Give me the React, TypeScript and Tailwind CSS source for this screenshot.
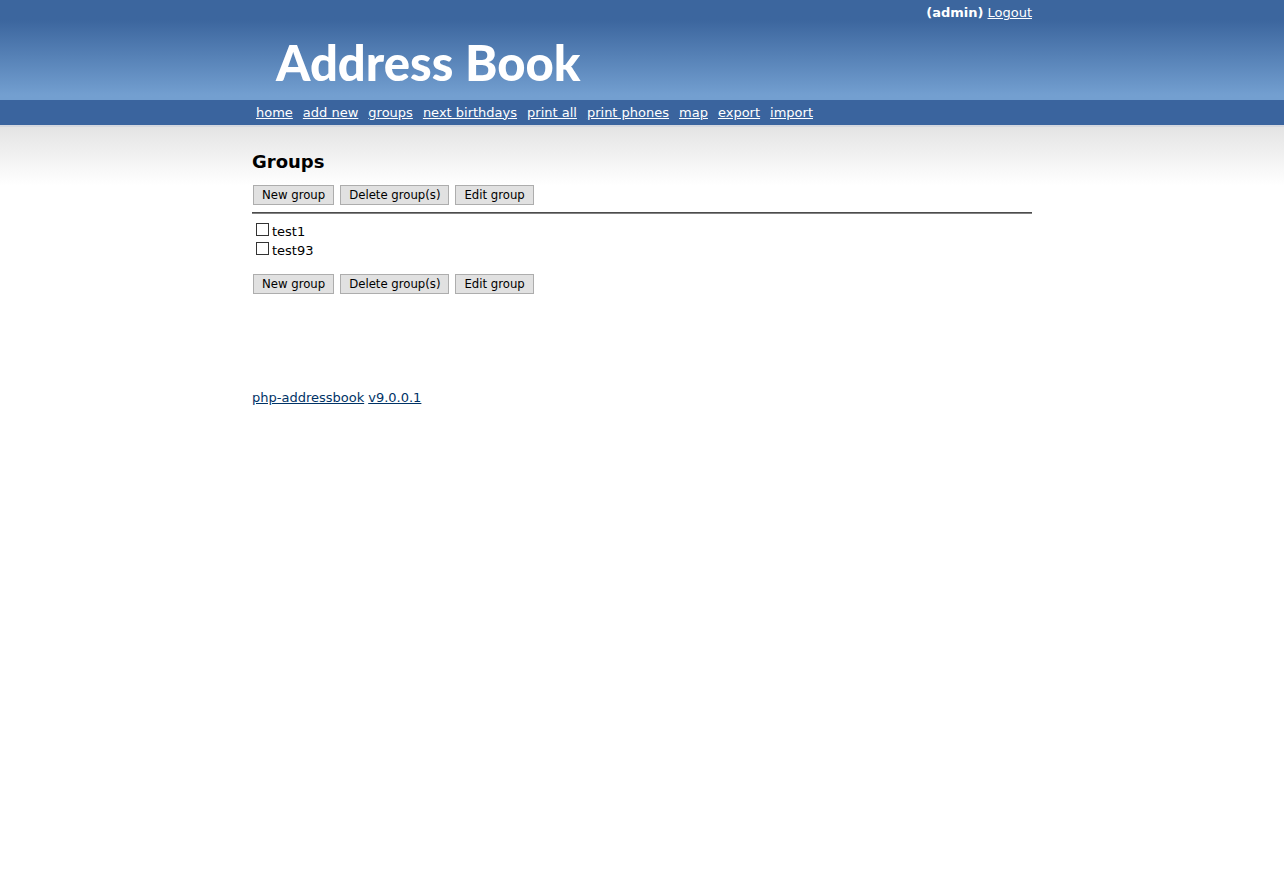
import React from "react";

const navItems = [
  "home",
  "add new",
  "groups",
  "next birthdays",
  "print all",
  "print phones",
  "map",
  "export",
  "import",
];

const groups = ["test1", "test93"];

function GroupActions() {
  return (
    <div className="flex gap-1.5 px-px">
      {["New group", "Delete group(s)", "Edit group"].map((label) => (
        <button
          key={label}
          type="button"
          className="h-5 border border-[#adadad] bg-[#e1e1e1] px-2 font-['DejaVu_Sans_Condensed','DejaVu_Sans',sans-serif] text-[13px] leading-[18px] text-black"
        >
          {label}
        </button>
      ))}
    </div>
  );
}

export default function App() {
  return (
    <div className="min-h-screen bg-white font-['Verdana','DejaVu_Sans',sans-serif] text-[13px] leading-4 text-black">
      <header className="h-[100px] bg-linear-to-b from-[#3c669e] from-20% to-[#739fd0] to-95%">
        <div className="mx-auto max-w-[780px]">
          <div className="flex justify-end gap-1 pt-[5px] text-white">
            <b>(admin)</b>
            <a href="#logout" className="underline">
              Logout
            </a>
          </div>
          <h1 className="pt-[13px] pl-6 font-['Lato',sans-serif] text-[49px] leading-[56px] font-black whitespace-nowrap text-white">
            Address Book
          </h1>
        </div>
      </header>
      <nav className="bg-[#3a649e]">
        <ul className="mx-auto flex h-[25px] max-w-[780px] items-center gap-2.5 px-1 text-white">
          {navItems.map((item) => (
            <li key={item}>
              <a href={"#" + item.replace(" ", "-")} className="whitespace-nowrap underline">
                {item}
              </a>
            </li>
          ))}
        </ul>
      </nav>
      <div className="border-t-2 border-[#d5d8df] bg-linear-to-b from-[#e4e4e4] to-white to-[58px]">
        <main className="mx-auto max-w-[780px] pt-6">
          <h2 className="text-lg leading-[22px] font-bold">Groups</h2>
          <div className="pt-3">
            <GroupActions />
          </div>
          <hr className="mt-[7px] h-0.5 border-t border-b border-t-[#4c4c4c] border-b-[#828282]" />
          <ul className="pt-[9px] pl-1">
            {groups.map((group) => (
              <li key={group} className="h-[19px]">
                <label className="flex items-start gap-[3px]">
                  <input
                    type="checkbox"
                    className="size-[13px] appearance-none border border-[#333333] bg-white checked:bg-[#333333]"
                  />
                  <span className="leading-[18px]">{group}</span>
                </label>
              </li>
            ))}
          </ul>
          <div className="pt-[13px]">
            <GroupActions />
          </div>
        </main>
        <footer className="mx-auto flex max-w-[780px] gap-1 pt-24 text-[#003366]">
          <a href="#project" className="underline">
            php-addressbook
          </a>
          <a href="#version" className="underline">
            v9.0.0.1
          </a>
        </footer>
      </div>
    </div>
  );
}
